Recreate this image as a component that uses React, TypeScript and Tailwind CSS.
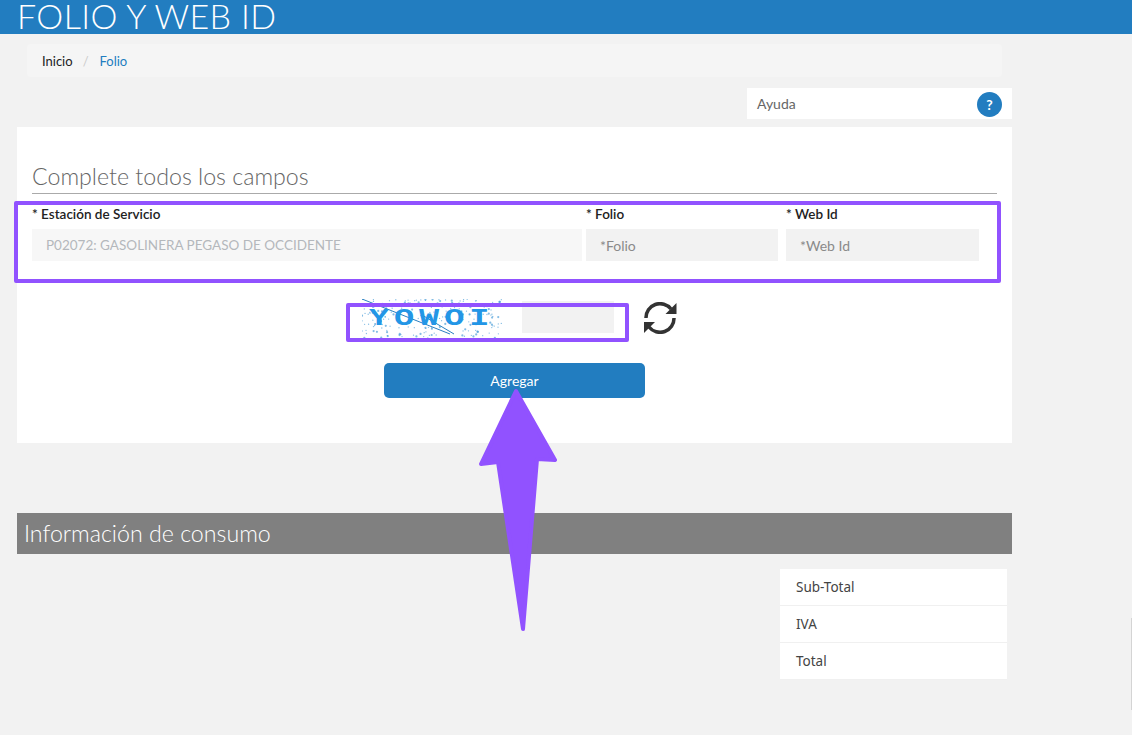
const totals = ["Sub-Total", "IVA", "Total"];

// manchas del captcha, siempre las mismas
const noise = Array.from({ length: 190 }, (_, i) => {
    const a = Math.sin(i * 12.9898) * 43758.5453;
    const b = Math.sin(i * 78.233) * 24634.6345;
    return {
        x: (a - Math.floor(a)) * 140,
        y: (b - Math.floor(b)) * 39,
        r: i % 3 === 0 ? 1.1 : 0.65,
    };
});

const Captcha = () => (
    <svg width="140" height="39" viewBox="0 0 140 39" className="shrink-0">
        {noise.map((n, i) => (
            <circle key={i} cx={n.x} cy={n.y} r={n.r} fill="#4f9fd8" opacity="0.7" />
        ))}
        <path d="M0 0 L88 35" stroke="#2a7fc0" strokeWidth="1" fill="none" />
        <path d="M60 16 L92 35" stroke="#2a7fc0" strokeWidth="1" fill="none" />
        <text
            x="5"
            y="26"
            transform="scale(1.4 1)"
            letterSpacing="3.5"
            fontFamily="'Liberation Mono', monospace"
            fontWeight="700"
            fontSize="24"
            fill="#2396e6"
        >
            YOWOI
        </text>
    </svg>
);

const RefreshIcon = () => (
    <svg width="34" height="32" viewBox="0 0 34 32" className="mt-[3px] ml-[29px] shrink-0" fill="none">
        <path d="M3 16 A14 14 0 0 1 28 7" stroke="#333" strokeWidth="3.5" />
        <path d="M33.5 1 V12 H22.5 Z" fill="#333" />
        <path d="M31 16 A14 14 0 0 1 6 25" stroke="#333" strokeWidth="3.5" />
        <path d="M1 20 H12 L1 31 Z" fill="#333" />
    </svg>
);

const Field = ({ label, value, width, disabled }: { label: string; value: string; width: string; disabled?: boolean }) => (
    <div className={`flex flex-col ${width}`}>
        <label className="h-[25px] text-[13.5px] leading-[20px] font-semibold text-[#222]">{label}</label>
        <div className={`flex h-[32px] items-center pl-[14px] ${disabled ? "bg-[#f7f7f7] text-[13.5px] text-[#b4b8bc]" : "bg-[#f2f2f2] text-[14px] text-[#8a8a8a]"}`}>
            {value}
        </div>
    </div>
);

export default function App() {
    return (
        <div className="relative h-[735px] w-[1132px] overflow-hidden bg-[#f2f2f2] font-['Lato','Noto_Sans',sans-serif]">
            <header className="h-[34px] bg-[#227dc0] pl-[17px]">
                <h1 className="text-[34px] leading-[32px] font-light tracking-[0.4px] whitespace-nowrap text-white">FOLIO Y WEB ID</h1>
            </header>

            <nav className="mt-[10px] ml-[27px] flex h-[33px] w-[975px] items-center rounded bg-[#f5f5f5] pt-[3px] pl-[15px] text-[13px]">
                <span className="text-[#222]">Inicio</span>
                <span className="mr-[11px] ml-[10px] text-[#ccc]">/</span>
                <span className="text-[#227dc0]">Folio</span>
            </nav>

            <div className="mt-[11px] ml-[747px] flex h-[31px] w-[265px] items-center justify-between bg-white pr-[10px] pl-[10px]">
                <span className="text-[14px] text-[#666]">Ayuda</span>
                <span className="mt-[1px] flex h-[25px] w-[25px] items-center justify-center rounded-full bg-[#227dc0] text-[14px] font-bold text-white">?</span>
            </div>

            <section className="mt-[8px] ml-[17px] h-[316px] w-[995px] bg-white px-[15px]">
                <div className="flex h-[67px] items-end border-b border-[#aaa] pb-[1px]">
                    <h2 className="text-[23.2px] leading-[32px] font-light text-[#666]">Complete todos los campos</h2>
                </div>
                <div className="mt-[10px] flex">
                    <Field label="* Estación de Servicio" value="P02072: GASOLINERA PEGASO DE OCCIDENTE" width="w-[550px]" disabled />
                    <div className="w-[4px]" />
                    <Field label="* Folio" value="*Folio" width="w-[192px]" />
                    <div className="w-[8px]" />
                    <Field label="* Web Id" value="*Web Id" width="w-[193px]" />
                </div>
                <div className="mt-[38px] ml-[330px] flex items-start">
                    <Captcha />
                    <div className="mt-[2px] ml-[20px] h-[32px] w-[92px] bg-[#f2f2f2]" />
                    <RefreshIcon />
                </div>
                <button className="mt-[25px] ml-[352px] block h-[35px] w-[261px] rounded-[5px] bg-[#227dc0] text-[14px] text-white">Agregar</button>
            </section>

            <div className="mt-[70px] ml-[17px] flex h-[41px] w-[995px] items-center bg-[#808080] pl-[7px] text-[23.2px] font-light text-white">
                Información de consumo
            </div>

            <table className="mt-[15px] ml-[780px] w-[227px] bg-white text-[13.5px] text-[#444] font-['Noto_Sans',sans-serif]">
                <tbody>
                    {totals.map(t => (
                        <tr key={t} className="h-[37px] border-b border-[#f0f0f0] first:h-[36px]">
                            <td className="pt-[1px] pl-[16px]">{t}</td>
                        </tr>
                    ))}
                </tbody>
            </table>

            {/* marcas moradas encima de la captura */}
            <div className="absolute top-[201px] left-[14px] h-[82px] w-[987px] rounded-[2px] border-4 border-[#9152ff]" />
            <div className="absolute top-[303px] left-[346px] h-[39px] w-[283px] rounded-[2px] border-4 border-[#9152ff]" />
            <svg className="absolute top-0 left-0" width="1132" height="735" viewBox="0 0 1132 735" fill="none">
                <path
                    d="M516 391 L555 460 L537 459 L523 629 L498 462 L481 464 Z"
                    fill="#9152ff"
                    stroke="#9152ff"
                    strokeWidth="4"
                    strokeLinejoin="round"
                />
            </svg>
            <div className="absolute top-[618px] right-0 h-[92px] w-[1px] bg-[#d4d4d4]" />
        </div>
    );
}
